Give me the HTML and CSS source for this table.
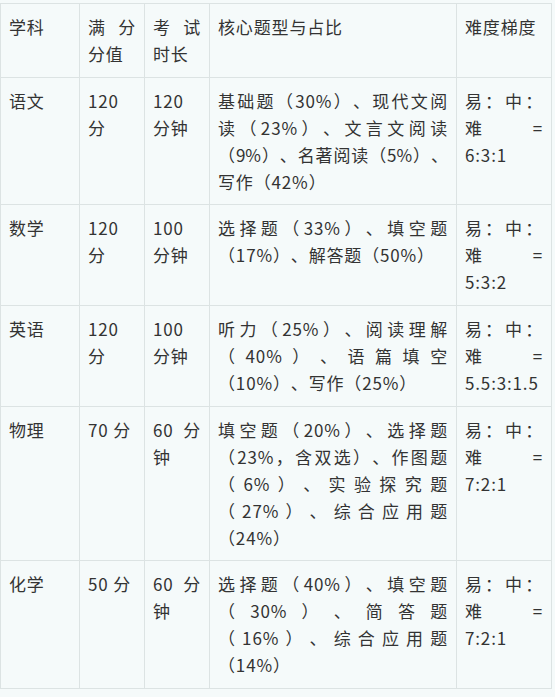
FILE: index.html
```html
<!DOCTYPE html>
<html lang="zh-CN">
<head>
<meta charset="utf-8">
<link rel="stylesheet" href="styles.css">
</head>
<body>
<table class="exam">
  <colgroup>
    <col class="c1"><col class="c2"><col class="c3"><col class="c4"><col class="c5">
  </colgroup>
  <tr><td>学科</td><td>满分分值</td><td>考试时长</td><td>核心题型与占比</td><td>难度梯度</td></tr>
  <tr><td>语文</td><td>120 分</td><td>120 分钟</td><td>基础题（30%）、现代文阅读（23%）、文言文阅读<span class="tight">（9%）、名著阅读（5%）、</span>写作（42%）</td><td>易：中：难 = 6:3:1</td></tr>
  <tr><td>数学</td><td>120 分</td><td>100 分钟</td><td>选择题（33%）、填空题（17%）、解答题（50%）</td><td>易：中：难 = 5:3:2</td></tr>
  <tr><td>英语</td><td>120 分</td><td>100 分钟</td><td>听力（25%）、阅读理解（40%）、语篇填空（10%）、写作（25%）</td><td>易：中：难 = 5.5:3:1.5</td></tr>
  <tr><td>物理</td><td>70 分</td><td>60 分钟</td><td>填空题（20%）、选择题（23%，含双选）、作图题（6%）、实验探究题（27%）、综合应用题（24%）</td><td>易：中：难 = 7:2:1</td></tr>
  <tr><td>化学</td><td>50 分</td><td>60 分钟</td><td>选择题（40%）、填空题（30%）、简答题（16%）、综合应用题（14%）</td><td>易：中：难 = 7:2:1</td></tr>
</table>
</body>
</html>
```
FILE: styles.css
```css
html, body {
  margin: 0;
  padding: 0;
  background: #f5fafa;
}
body {
  padding-top: 3px;
  font-family: "Noto Sans CJK SC", "Noto Sans", sans-serif;
  font-size: 17px;
  letter-spacing: 0.85px;
  color: #333;
  text-spacing-trim: space-all;
}
.exam {
  border-collapse: collapse;
  table-layout: fixed;
  width: 552px;
}
.c1 { width: 79px; }
.c2 { width: 65px; }
.c3 { width: 65px; }
.c4 { width: 247px; }
.c5 { width: 95px; }
.exam td {
  border: 1px solid #dce3e3;
  padding: 10px 8px 9px 8px;
  line-height: 26.9px;
  vertical-align: top;
  text-align: justify;
}
.tight {
  letter-spacing: 0;
}
```
